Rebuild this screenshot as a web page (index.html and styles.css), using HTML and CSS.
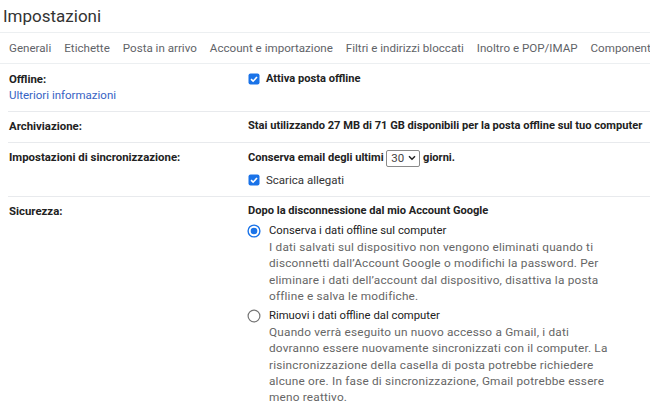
FILE: index.html
```html
<!DOCTYPE html>
<html lang="it">
<head>
<meta charset="utf-8">
<title>Impostazioni</title>
<link rel="stylesheet" href="styles.css">
</head>
<body>
<div class="page">
  <h1 class="title">Impostazioni</h1>
  <nav class="tabs">
    <span class="tab">Generali</span>
    <span class="tab">Etichette</span>
    <span class="tab">Posta in arrivo</span>
    <span class="tab">Account e importazione</span>
    <span class="tab">Filtri e indirizzi bloccati</span>
    <span class="tab">Inoltro e POP/IMAP</span>
    <span class="tab">Componenti aggiuntivi</span>
  </nav>
  <div class="settings">
    <div class="row row-offline">
      <div class="label">
        <div>Offline:</div>
        <a class="link" href="#">Ulteriori informazioni</a>
      </div>
      <div class="value">
        <label class="check strong"><span class="box"><svg viewBox="0 0 12 12" width="12" height="12"><rect x="0.5" y="0.5" width="11" height="11" rx="2" fill="#1a73e8"/><path d="M3 6.2 L5.1 8.2 L9 4" fill="none" stroke="#fff" stroke-width="1.6"/></svg></span>Attiva posta offline</label>
      </div>
    </div>
    <div class="row">
      <div class="label">Archiviazione:</div>
      <div class="value strong">Stai utilizzando 27 MB di 71 GB disponibili per la posta offline sul tuo computer</div>
    </div>
    <div class="row">
      <div class="label">Impostazioni di sincronizzazione:</div>
      <div class="value">
        <div class="strong sync-line">Conserva email degli ultimi <span class="select">30<svg viewBox="0 0 8 6" width="8" height="6"><path d="M1 1.2 L4 4.2 L7 1.2" fill="none" stroke="#222" stroke-width="1.5"/></svg></span> giorni.</div>
        <label class="check plain"><span class="box"><svg viewBox="0 0 12 12" width="12" height="12"><rect x="0.5" y="0.5" width="11" height="11" rx="2" fill="#1a73e8"/><path d="M3 6.2 L5.1 8.2 L9 4" fill="none" stroke="#fff" stroke-width="1.6"/></svg></span>Scarica allegati</label>
      </div>
    </div>
    <div class="row row-last">
      <div class="label">Sicurezza:</div>
      <div class="value">
        <div class="strong">Dopo la disconnessione dal mio Account Google</div>
        <div class="option">
          <span class="radio"><svg viewBox="0 0 14 14" width="14" height="14"><circle cx="7" cy="7" r="5.9" fill="none" stroke="#1a73e8" stroke-width="1.4"/><circle cx="7" cy="7" r="3.3" fill="#1a73e8"/></svg></span>
          <div class="option-text">
            <div class="option-title">Conserva i dati offline sul computer</div>
            <div class="option-desc">I dati salvati sul dispositivo non vengono eliminati quando ti disconnetti dall’Account Google o modifichi la password. Per eliminare i dati dell’account dal dispositivo, disattiva la posta offline e salva le modifiche.</div>
          </div>
        </div>
        <div class="option">
          <span class="radio"><svg viewBox="0 0 14 14" width="14" height="14"><circle cx="7" cy="7" r="5.9" fill="none" stroke="#757575" stroke-width="1.2"/></svg></span>
          <div class="option-text">
            <div class="option-title">Rimuovi i dati offline dal computer</div>
            <div class="option-desc">Quando verrà eseguito un nuovo accesso a Gmail, i dati dovranno essere nuovamente sincronizzati con il computer. La risincronizzazione della casella di posta potrebbe richiedere alcune ore. In fase di sincronizzazione, Gmail potrebbe essere meno reattivo.</div>
          </div>
        </div>
      </div>
    </div>
  </div>
</div>
</body>
</html>
```

FILE: styles.css
```css
* { box-sizing: border-box; }
html, body { margin: 0; padding: 0; background: #fff; }
body {
  font-family: Roboto, "Liberation Sans", Arial, sans-serif;
  font-size: 11.5px;
  color: #222;
  overflow: hidden;
  width: 650px;
  height: 404px;
}
.page { width: 650px; }
.title {
  margin: 0;
  height: 33px;
  padding: 6px 0 0 3px;
  font-size: 17px;
  font-weight: 400;
  line-height: 20px;
  color: #333;
  border-bottom: 1px solid #eceff1;
}
.tabs {
  display: flex;
  gap: 13px;
  white-space: nowrap;
  height: 31px;
  align-items: center;
  padding-left: 9px;
  border-bottom: 1px solid #eceff1;
  overflow: hidden;
  font-size: 11.6px;
  color: #5f6368;
}
.settings { padding-left: 8px; }
.row {
  display: grid;
  grid-template-columns: 239px 1fr;
  padding: 6px 0 8px 1px;
  border-bottom: 1px solid #e8eaed;
  line-height: 16px;
}
.row-offline { padding-top: 7px; padding-bottom: 8px; }
.row-last { border-bottom: none; }
.label { font-weight: 700; font-size: 11.4px; }
.link {
  display: block;
  font-weight: 400;
  font-size: 11.5px;
  color: #3763c4;
  text-decoration: none;
}
.strong { font-weight: 700; font-size: 11.1px; white-space: nowrap; }
.check { display: flex; align-items: center; }
.check.plain { font-weight: 400; font-size: 11.5px; color: #333; }
.box { display: inline-flex; width: 12px; height: 12px; margin-right: 6px; }
.sync-line { height: 18px; line-height: 18px; margin-bottom: 5px; display: flex; align-items: center; white-space: pre; }
.select {
  display: inline-flex;
  align-items: center;
  gap: 4px;
  height: 17px;
  padding: 0 3px 0 4px;
  border: 1px solid #8a8a8a;
  border-radius: 2px;
  font-weight: 400;
  font-size: 11.5px;
  color: #444;
}
.option {
  display: flex;
  margin-top: 4px;
}
.radio { width: 14px; height: 14px; margin: 1px 8px 0 -1px; flex: none; }
.option-text { width: 350px; }
.option-title { color: #222; font-size: 11.3px; line-height: 16px; }
.option-desc { color: #666; font-size: 11.8px; letter-spacing: 0.2px; line-height: 16.3px; }
```
